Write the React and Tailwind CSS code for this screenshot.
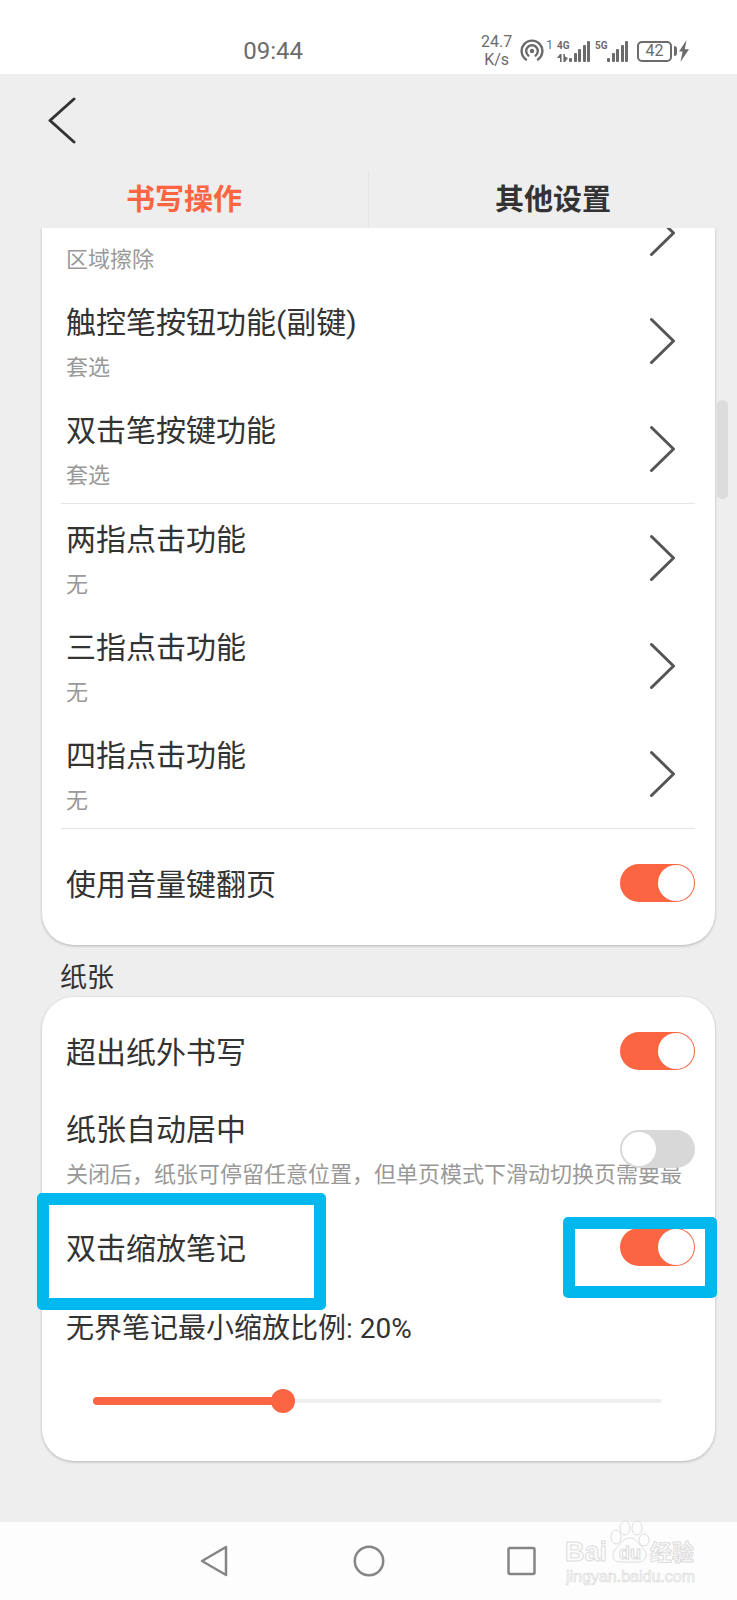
import React, { useState } from 'react';
import clsx from 'clsx';

const ACTIONS_STYLET = [
  { titre: '触控笔按钮功能(副键)', valeur: '套选' },
  { titre: '双击笔按键功能', valeur: '套选' },
];

const ACTIONS_DOIGTS = [
  { titre: '两指点击功能', valeur: '无' },
  { titre: '三指点击功能', valeur: '无' },
  { titre: '四指点击功能', valeur: '无' },
];

const ZOOM_MIN = 10;
const ZOOM_MAX = 40;

function Chevron() {
  return (
    <svg width="26" height="48" viewBox="0 0 26 48" fill="none" stroke="#555" strokeWidth="3" strokeLinecap="round" strokeLinejoin="round" className="shrink-0">
      <path d="M2.5 2.5 24.5 24 2.5 45.5" />
    </svg>
  );
}

function Barres() {
  return (
    <svg width="22" height="21" viewBox="0 0 22 21" fill="#6b6b6b">
      <rect x="0" y="17" width="3" height="4" rx="1" />
      <rect x="5" y="12" width="3" height="9" rx="1" />
      <rect x="9" y="8" width="3" height="13" rx="1" />
      <rect x="14" y="4" width="3" height="17" rx="1" />
      <rect x="18" y="0" width="3" height="21" rx="1" />
    </svg>
  );
}

function BarreEtat() {
  return (
    <header className="flex h-[74px] items-center bg-white pl-[33%] pr-12 text-[#6b6b6b]">
      <time className="mt-7 flex-1 text-2xl leading-8">09:44</time>
      <div className="mt-7 flex items-center">
        <div className="mr-2 text-center text-base leading-[18px]">
          <div>24.7</div>
          <div>K/s</div>
        </div>
        <svg width="24" height="24" viewBox="0 0 24 24" fill="none" stroke="#6b6b6b" strokeWidth="2.4" strokeLinecap="round">
          <circle cx="12" cy="12" r="2.2" fill="#6b6b6b" stroke="none" />
          <path d="M8.4 16.6a5.8 5.8 0 1 1 7.2 0" />
          <path d="M6 20.5a10.4 10.4 0 1 1 12 0" />
        </svg>
        <span className="mb-3 ml-0.5 text-xs leading-3">1</span>
        <div className="ml-1 flex items-end">
          <div className="flex h-[21px] w-3 flex-col justify-between">
            <span className="text-[10px] font-bold leading-[10px]">4G</span>
            <svg width="11" height="8" viewBox="0 0 11 8" fill="#6b6b6b">
              <path d="M0 4 3 0h1.6v8H3V4zM6.4 0H8v2.5L11 4 8 8H6.4z" />
            </svg>
          </div>
          <Barres />
        </div>
        <div className="ml-1 flex items-start">
          <span className="w-3 text-[10px] font-bold leading-[10px]">5G</span>
          <Barres />
        </div>
        <div className="ml-2 flex h-[21px] w-[35px] items-center justify-center rounded-[5px] border-2 border-[#6b6b6b] text-base leading-4">
          42
        </div>
        <div className="ml-[2px] h-[10px] w-[3px] rounded-r-sm bg-[#6b6b6b]" />
        <svg width="10" height="22" viewBox="0 0 10 22" fill="#6b6b6b" className="ml-0.5">
          <path d="M7.5 0 0 11.5h3.6L1.4 22 10 9.2H5.8z" />
        </svg>
      </div>
    </header>
  );
}

function LigneAction({ titre, valeur }) {
  return (
    <button type="button" className={clsx('flex w-full items-end overflow-hidden pl-6 pr-10 text-left', titre ? 'h-[108px]' : 'h-[59px]')}>
      <span className="flex flex-1 flex-col gap-[9px] pb-[11px]">
        {titre && <span className="text-3xl leading-10">{titre}</span>}
        <span className="text-[22px] leading-8 text-[#999]">{valeur}</span>
      </span>
      <span className="flex h-[108px] shrink-0 items-center">
        <Chevron />
      </span>
    </button>
  );
}

function LigneInterrupteur({ id, titre, note, defaut, children }) {
  const [actif, setActif] = useState(defaut);
  return (
    <div className={clsx('relative flex items-center pl-6 pr-5', note ? 'h-[108px]' : 'h-[88px]')}>
      <label htmlFor={id} className="flex min-w-0 flex-1 flex-col gap-[9px] pt-[3px]">
        <span className="text-3xl leading-10">{titre}</span>
        {note && <span className="whitespace-nowrap text-[22px] leading-8 text-[#999]">{note}</span>}
      </label>
      <input
        id={id}
        type="checkbox"
        role="switch"
        checked={actif}
        onChange={(e) => setActif(e.target.checked)}
        className="flex h-[38px] w-[75px] shrink-0 appearance-none items-center rounded-full bg-[#d8d8d8] px-[2px] before:size-[34px] before:rounded-full before:bg-white checked:justify-end checked:bg-[#fb6542] checked:px-[1px] checked:before:size-9"
      />
      {children}
    </div>
  );
}

function Separateur() {
  return <hr className="ml-[19px] mr-5 border-[#e6e6e6]" />;
}

function Filigrane() {
  return (
    <svg width="140" height="68" viewBox="0 0 140 68" className="absolute bottom-3 right-9" fill="#fdfdfd" stroke="#dcdcdc" strokeWidth="1" fontFamily="'Liberation Sans', 'Noto Sans CJK SC', sans-serif">
      <text x="4" y="41" fontSize="27" fontWeight="700">Bai</text>
      <ellipse cx="55" cy="17" rx="5" ry="7" />
      <ellipse cx="64" cy="8" rx="5" ry="7" />
      <ellipse cx="76" cy="8" rx="5" ry="7" />
      <ellipse cx="83" cy="20" rx="5" ry="6" />
      <path d="M69 18c5 0 7 4 10 7 4 4 7 7 6 11-1 5-5 6-9 6H60c-6 0-8-3-8-7 0-4 3-6 6-10s6-7 11-7z" />
      <text x="58" y="39" fontSize="18" fontWeight="700">du</text>
      <text x="89" y="40" fontSize="22" fontWeight="700">经验</text>
      <text x="5" y="62" fontSize="16" strokeWidth="0.7">jingyan.baidu.com</text>
    </svg>
  );
}

function BarreNavigation() {
  return (
    <nav className="relative flex h-[78px] items-center justify-center gap-[121px] bg-[#fdfdfd]">
      <button type="button" aria-label="返回">
        <svg width="32" height="32" viewBox="0 0 32 32" fill="none" stroke="#858585" strokeWidth="2.5" strokeLinejoin="round">
          <path d="M2 16 26 2v28z" />
        </svg>
      </button>
      <button type="button" aria-label="主页">
        <svg width="32" height="32" viewBox="0 0 32 32" fill="none" stroke="#858585" strokeWidth="2.5">
          <circle cx="16" cy="16" r="14.2" />
        </svg>
      </button>
      <button type="button" aria-label="最近任务">
        <svg width="32" height="32" viewBox="0 0 32 32" fill="none" stroke="#858585" strokeWidth="2.5">
          <rect x="2.5" y="3" width="26" height="26" rx="1.5" />
        </svg>
      </button>
      <Filigrane />
    </nav>
  );
}

export default function App() {
  const [zoom, setZoom] = useState(20);
  const rempli = ((zoom - ZOOM_MIN) / (ZOOM_MAX - ZOOM_MIN)) * 100;

  return (
    <div className="flex min-h-screen flex-col bg-[#eee] font-['Roboto','Noto_Sans_CJK_SC',sans-serif] text-[#333]">
      <BarreEtat />

      <div className="flex h-[98px] items-center pb-1 pl-[46px]">
        <button type="button" aria-label="返回">
          <svg width="32" height="48" viewBox="0 0 32 48" fill="none" stroke="#333" strokeWidth="3" strokeLinecap="round" strokeLinejoin="round">
            <path d="M28 2 4 23.5 28 45" />
          </svg>
        </button>
      </div>

      <div role="tablist" className="flex h-14 text-[29px] font-bold leading-10">
        <button type="button" role="tab" aria-selected="true" className="flex-1 border-r border-[#e4e4e4] text-[#fb6542]">书写操作</button>
        <button type="button" role="tab" aria-selected="false" className="flex-1">其他设置</button>
      </div>

      <main className="relative flex-1 overflow-hidden pb-[61px] pl-[42px] pr-[22px]">
        <section className="rounded-b-[32px] bg-white pb-[18px] shadow-[0_1px_3px_rgba(0,0,0,0.25)]">
          <LigneAction valeur="区域擦除" />
          {ACTIONS_STYLET.map((a) => <LigneAction key={a.titre} {...a} />)}
          <Separateur />
          {ACTIONS_DOIGTS.map((a) => <LigneAction key={a.titre} {...a} />)}
          <Separateur />
          <div className="pt-[10px]">
            <LigneInterrupteur id="volume" titre="使用音量键翻页" defaut />
          </div>
        </section>

        <h2 className="-mb-px px-[18px] pt-[13px] text-[27px] leading-10">纸张</h2>

        <section className="rounded-[32px] bg-white pb-12 pt-[10px] shadow-[0_1px_3px_rgba(0,0,0,0.25)]">
          <LigneInterrupteur id="hors-papier" titre="超出纸外书写" defaut />
          <LigneInterrupteur
            id="centrage"
            titre="纸张自动居中"
            note="关闭后，纸张可停留任意位置，但单页模式下滑动切换页需要最"
            defaut={false}
          />
          <LigneInterrupteur id="double-clic" titre="双击缩放笔记" defaut>
            {/* cadres de mise en évidence */}
            <div className="pointer-events-none absolute -left-[5px] -top-[10px] h-[117px] w-[289px] rounded-[5px] border-[12px] border-[#00b7ee]" />
            <div className="pointer-events-none absolute -right-[2px] top-[14px] h-[81px] w-[154px] rounded-[5px] border-[12px] border-[#00b7ee]" />
          </LigneInterrupteur>

          <div className="pt-[18px]">
            <label htmlFor="zoom" className="block pl-6 text-[28px] leading-10">
              无界笔记最小缩放比例: {zoom}%
            </label>
            <div className="relative ml-[51px] mr-[53px] mt-10 flex h-6 items-center">
              <div className="h-1 w-full rounded-full bg-[#efefef]" />
              <div className="absolute left-0 h-2 rounded-full bg-[#fb6542]" style={{ width: rempli + '%' }} />
              <input
                id="zoom"
                type="range"
                min={ZOOM_MIN}
                max={ZOOM_MAX}
                value={zoom}
                onChange={(e) => setZoom(Number(e.target.value))}
                className="absolute -inset-x-3 h-6 appearance-none bg-transparent [&::-webkit-slider-thumb]:size-6 [&::-webkit-slider-thumb]:appearance-none [&::-webkit-slider-thumb]:rounded-full [&::-webkit-slider-thumb]:bg-[#fb6542]"
              />
            </div>
          </div>
        </section>

        {/* indicateur de défilement */}
        <div className="absolute right-[9px] top-[172px] h-[99px] w-[11px] rounded-full bg-[#dcdcdc]" />
      </main>

      <BarreNavigation />
    </div>
  );
}
